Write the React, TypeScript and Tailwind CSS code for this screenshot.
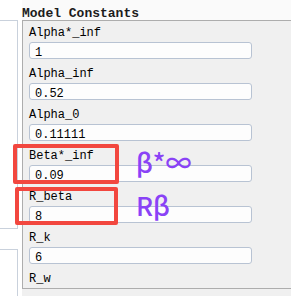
import React from "react";

const items: { label: string; value: string }[] = [
  { label: "Alpha*_inf", value: "1" },
  { label: "Alpha_inf", value: "0.52" },
  { label: "Alpha_0", value: "0.11111" },
  { label: "Beta*_inf", value: "0.09" },
  { label: "R_beta", value: "8" },
  { label: "R_k", value: "6" },
];

export default function App() {
  const mono = { fontFamily: '"Liberation Mono", "DejaVu Sans Mono", monospace' };
  return (
    <div className="relative w-[291px] h-[296px] overflow-hidden bg-white flex" style={mono}>
      {/* left column */}
      <div className="w-[22px] flex flex-col shrink-0">
        <div className="mt-[20px] w-[18px] h-[209px] border-t border-r border-b border-[#c9d1dc]" />
        <div className="mt-[20px] w-[18px] flex-1 border-t border-r border-[#c9d1dc]" />
      </div>
      {/* right column */}
      <div className="flex-1 flex flex-col">
        <div className="h-[20px] bg-[#fafafa] pt-[7px] text-[13px] leading-[14px] font-bold text-[#1c1c1c] whitespace-nowrap">
          Model Constants
        </div>
        <div className="h-[269px] overflow-hidden border-t border-l border-b border-[#adadad] bg-[#f0f0f0] pl-[6px] flex flex-col">
          {items.map((it, i) => (
            <div key={it.label} className="flex flex-col">
              <div
                className={
                  i === 0
                    ? "h-[21px] pt-[5px] leading-[14px] text-[12px] text-black whitespace-nowrap"
                    : "h-[24px] pt-[8px] leading-[14px] text-[12px] text-black whitespace-nowrap"
                }
              >
                {it.label}
              </div>
              <div className="w-[223px] h-[17px] rounded-[3px] border border-[#b8c3d3] bg-[#fdfdfd] pl-[5px] pt-[4px] leading-[12px] text-[12px] text-black overflow-hidden whitespace-nowrap">
                {it.value}
              </div>
            </div>
          ))}
          <div className="h-[24px] pt-[8px] leading-[14px] text-[12px] text-black whitespace-nowrap">R_w</div>
        </div>
        <div className="flex-1 bg-[#f0f0f0]" />
      </div>

      {/* annotations */}
      <div className="absolute left-[13px] top-[144px] w-[106px] h-[40px] border-[4px] border-[#f2473f] rounded-[2px]" />
      <div className="absolute left-[15px] top-[187px] w-[103px] h-[38px] border-[4px] border-[#f2473f] rounded-[2px]" />
      <div
        className="absolute left-[136px] top-[145px] text-[26px] leading-[34px] font-medium text-[#8a42f6] whitespace-nowrap"
        style={{ fontFamily: '"Noto Sans CJK SC", "Noto Sans", sans-serif' }}
      >
        β*∞
      </div>
      <div
        className="absolute left-[136px] top-[188px] text-[26px] leading-[34px] font-medium text-[#8a42f6] whitespace-nowrap"
        style={{ fontFamily: '"Noto Sans CJK SC", "Noto Sans", sans-serif' }}
      >
        Rβ
      </div>
    </div>
  );
}
